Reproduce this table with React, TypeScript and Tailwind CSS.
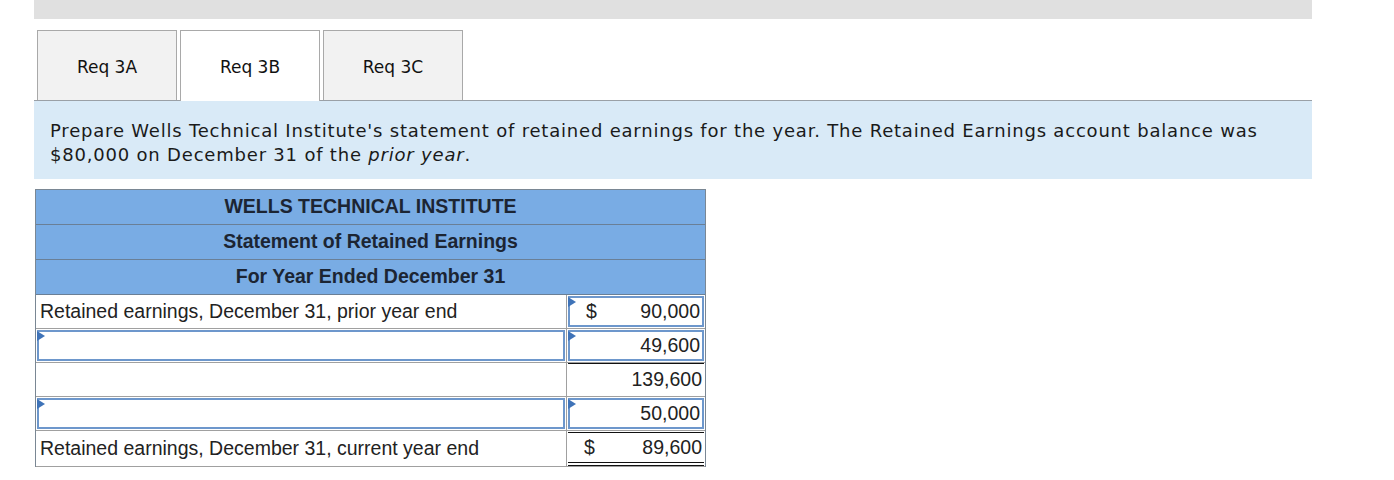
import React from "react";

function Tri() {
  return (
    <span className="absolute left-[-2px] top-[-1px] w-0 h-0 border-y-[5px] border-y-transparent border-l-[8px] border-l-[#3f73b8]" />
  );
}

function InputBox({ children, className = "" }: { children?: React.ReactNode; className?: string }) {
  return (
    <div className={"relative flex-1 h-full border-2 border-[#6d97cc] bg-white flex items-center " + className}>
      <Tri />
      {children}
    </div>
  );
}

function Amount({ dollar, value }: { dollar?: boolean; value: string }) {
  return (
    <div className="flex w-full items-center justify-between pl-[16px] pr-[2px]">
      <span>{dollar ? "$" : ""}</span>
      <span>{value}</span>
    </div>
  );
}

export default function App() {
  const tabBase =
    "w-[140px] flex items-center justify-center border border-b-0 border-[#a9a9a9] text-[17px] text-[#111] font-['DejaVu_Sans',Verdana,sans-serif]";
  return (
    <div className="w-[1394px] h-[480px] bg-white font-['Liberation_Sans',Arial,sans-serif] text-[#222]">
      <div className="ml-[34px] w-[1278px]">
        <div className="h-[19px] bg-[#e0e0e0]" />
        <div className="mt-[11px] flex items-start gap-[3px] pl-[3px] border-b border-[#9aa0a6]">
          <div className={tabBase + " h-[70px] pt-[4px] bg-[#f2f2f2]"}>Req 3A</div>
          <div className={tabBase + " h-[71px] pt-[4px] -mb-px bg-white"}>Req 3B</div>
          <div className={tabBase + " h-[70px] pt-[4px] bg-[#f2f2f2]"}>Req 3C</div>
        </div>
        <div className="bg-[#d9eaf7] pl-[16px] pr-[16px] pt-[18px] pb-[12px] text-[18px] leading-[24px] tracking-[0.8px] text-[#1a1a1a] font-['DejaVu_Sans',Verdana,sans-serif]">
          Prepare Wells Technical Institute's statement of retained earnings for the year. The Retained Earnings account balance was
          <br />
          $80,000 on December 31 of the <i>prior year</i>.
        </div>

        <div className="mt-[10px] ml-px w-[671px] border border-b-0 border-[#7a8794] text-[19.5px]">
          <div className="h-[35px] bg-[#79ace4] border-b border-[#6a7f96] flex items-center justify-center font-bold text-[#1c2533]">
            WELLS TECHNICAL INSTITUTE
          </div>
          <div className="h-[35px] bg-[#79ace4] border-b border-[#6a7f96] flex items-center justify-center font-bold text-[#1c2533]">
            Statement of Retained Earnings
          </div>
          <div className="h-[35px] bg-[#79ace4] border-b border-[#6a7f96] flex items-center justify-center font-bold text-[#1c2533]">
            For Year Ended December 31
          </div>

          {/* Row 1 */}
          <div className="h-[34px] flex border-b border-[#a0a0a0]">
            <div className="w-[531px] border-r border-[#a0a0a0] flex items-center pl-[4px]">
              Retained earnings, December 31, prior year end
            </div>
            <div className="flex-1 flex p-[1px]">
              <InputBox>
                <Amount dollar value="90,000" />
              </InputBox>
            </div>
          </div>

          {/* Row 2 */}
          <div className="h-[34px] flex border-b border-[#a0a0a0]">
            <div className="w-[531px] border-r border-[#a0a0a0] flex p-[1px]">
              <InputBox />
            </div>
            <div className="flex-1 flex p-[1px]">
              <InputBox>
                <Amount value="49,600" />
              </InputBox>
            </div>
          </div>

          {/* Row 3 */}
          <div className="h-[34px] flex border-b border-[#a0a0a0]">
            <div className="w-[531px] border-r border-[#a0a0a0]" />
            <div className="flex-1 flex px-[1px]">
              <div className="flex-1 border-t border-[#111] flex items-center">
                <Amount value="139,600" />
              </div>
            </div>
          </div>

          {/* Row 4 */}
          <div className="h-[34px] flex border-b border-[#a0a0a0]">
            <div className="w-[531px] border-r border-[#a0a0a0] flex p-[1px]">
              <InputBox />
            </div>
            <div className="flex-1 flex p-[1px]">
              <InputBox>
                <Amount value="50,000" />
              </InputBox>
            </div>
          </div>

          {/* Row 5 */}
          <div className="h-[36px] flex border-b border-[#a0a0a0]">
            <div className="w-[531px] border-r border-[#a0a0a0] flex items-center pl-[4px]">
              Retained earnings, December 31, current year end
            </div>
            <div className="flex-1 flex px-[1px] pt-[1px]">
              <div className="flex-1 border-t border-b-4 border-double border-[#111] flex items-center">
                <Amount dollar value="89,600" />
              </div>
            </div>
          </div>
        </div>
      </div>
    </div>
  );
}
